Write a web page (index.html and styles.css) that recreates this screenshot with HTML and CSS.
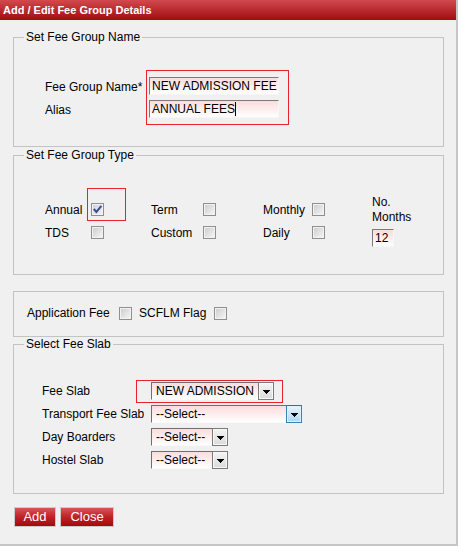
FILE: index.html
```html
<!DOCTYPE html>
<html lang="en">
<head>
<meta charset="utf-8">
<title>Add / Edit Fee Group Details</title>
<link rel="stylesheet" href="styles.css">
</head>
<body>
<div class="panel">
  <div class="titlebar">Add / Edit Fee Group Details</div>
  <div class="content">
    <fieldset class="fs fs-name">
      <legend>Set Fee Group Name</legend>
      <div class="name-body">
        <div class="name-labels"><span>Fee Group Name*</span><span>Alias</span></div>
        <div class="redbox">
          <span class="field w130">NEW ADMISSION FEE</span>
          <span class="field w130">ANNUAL FEES<i class="caret"></i></span>
        </div>
      </div>
    </fieldset>

    <fieldset class="fs fs-type">
      <legend>Set Fee Group Type</legend>
      <div class="type-grid">
        <div class="months">
          <div>No.</div>
          <div>Months</div>
          <span class="field w22">12</span>
        </div>
        <span class="lbl">Annual</span>
        <span class="cbcell"><span class="cb checked hl"><svg width="11" height="11" viewBox="0 0 11 11"><path d="M1.8 5 L4.4 8 L9.4 1.8" fill="none" stroke="#3a4c9a" stroke-width="2"/></svg></span></span>
        <span class="lbl">Term</span>
        <span class="cbcell"><span class="cb"></span></span>
        <span class="lbl">Monthly</span>
        <span class="cbcell"><span class="cb"></span></span>
        <span class="lbl">TDS</span>
        <span class="cbcell"><span class="cb"></span></span>
        <span class="lbl">Custom</span>
        <span class="cbcell"><span class="cb"></span></span>
        <span class="lbl">Daily</span>
        <span class="cbcell"><span class="cb"></span></span>
      </div>
    </fieldset>

    <fieldset class="fs fs-flags">
      <div class="flags">
        <span class="flag-lbl w92">Application Fee</span>
        <span class="cb"></span>
        <span class="flag-lbl w75 gap7">SCFLM Flag</span>
        <span class="cb"></span>
      </div>
    </fieldset>

    <fieldset class="fs fs-slab">
      <legend>Select Fee Slab</legend>
      <div class="slab-rows">
        <div class="slab-row">
          <span class="slab-lbl">Fee Slab</span>
          <div class="sel w123 hl2">
            <span class="val">NEW ADMISSION</span>
            <span class="arr"><svg width="7" height="4" viewBox="0 0 7 4"><path d="M0 0h7v1h-1v1h-1v1h-1v1h-1v-1h-1v-1h-1v-1h-1z" fill="#000"/></svg></span>
          </div>
        </div>
        <div class="slab-row">
          <span class="slab-lbl">Transport Fee Slab</span>
          <div class="sel w151">
            <span class="val">--Select--</span>
            <span class="arr focus"><svg width="7" height="4" viewBox="0 0 7 4"><path d="M0 0h7v1h-1v1h-1v1h-1v1h-1v-1h-1v-1h-1v-1h-1z" fill="#000"/></svg></span>
          </div>
        </div>
        <div class="slab-row">
          <span class="slab-lbl">Day Boarders</span>
          <div class="sel w77">
            <span class="val">--Select--</span>
            <span class="arr"><svg width="7" height="4" viewBox="0 0 7 4"><path d="M0 0h7v1h-1v1h-1v1h-1v1h-1v-1h-1v-1h-1v-1h-1z" fill="#000"/></svg></span>
          </div>
        </div>
        <div class="slab-row">
          <span class="slab-lbl">Hostel Slab</span>
          <div class="sel w77">
            <span class="val">--Select--</span>
            <span class="arr"><svg width="7" height="4" viewBox="0 0 7 4"><path d="M0 0h7v1h-1v1h-1v1h-1v1h-1v-1h-1v-1h-1v-1h-1z" fill="#000"/></svg></span>
          </div>
        </div>
      </div>
    </fieldset>

    <div class="actions">
      <button class="btn btn-add" type="button">Add</button>
      <button class="btn btn-close" type="button">Close</button>
    </div>
  </div>
</div>
</body>
</html>
```

FILE: styles.css
```css
html, body {
  margin: 0;
  padding: 0;
  background: #f0f0f0;
}
body {
  font-family: "Liberation Sans", Arial, sans-serif;
  font-size: 12px;
  color: #000;
}
.panel {
  width: 456px;
  height: 544px;
  background: #f0f0f0;
  border-right: 2px solid #c6c6c6;
  border-bottom: 2px solid #c6c6c6;
}
.titlebar {
  height: 20px;
  line-height: 20px;
  padding-left: 3px;
  color: #fff;
  font-size: 11px;
  font-weight: bold;
  background: linear-gradient(#d24a4e 0%, #b92a2e 50%, #a00d10 100%);
}
.content {
  padding: 10px 0 0 13px;
}
.fs {
  margin: 0;
  padding: 0;
  border: 1px solid #c3c3c3;
  width: 431px;
  box-sizing: border-box;
  min-width: 0;
}
.fs legend {
  margin-left: 10px;
  padding: 0 2px;
  line-height: 14px;
  font-size: 12px;
}

/* name */
.name-body {
  display: flex;
  padding: 26px 0 21px 31px;
}
.name-labels {
  width: 101px;
  display: flex;
  flex-direction: column;
  gap: 5px;
  padding-top: 8px;
}
.name-labels span {
  height: 18px;
  line-height: 18px;
}
.redbox {
  border: 1px solid #e3242b;
  padding: 6px 9px 6px 2px;
  display: flex;
  flex-direction: column;
  gap: 5px;
}
.field {
  display: block;
  height: 18px;
  box-sizing: border-box;
  border-top: 1px solid #7b7b7b;
  border-left: 1px solid #7b7b7b;
  border-right: 1px solid #f6f6f6;
  border-bottom: 1px solid #f6f6f6;
  background: linear-gradient(#fbdcdc, #fff);
  padding-left: 2px;
  line-height: 17px;
  white-space: nowrap;
  overflow: hidden;
}
.w130 { width: 130px; }
.w22 { width: 22px; }
.caret {
  display: inline-block;
  width: 1px;
  height: 14px;
  background: #000;
  vertical-align: -3px;
}

/* type */
.fs-type { margin-top: 1px; }
.type-grid {
  display: grid;
  grid-template-columns: 46px 60px 52px 60px 49px 60px auto;
  grid-template-rows: 23px 23px;
  padding: 36px 0 30px 31px;
}
.lbl { line-height: 25px; height: 23px; }
.cbcell {
  display: flex;
  align-items: center;
}
.months {
  grid-column: 7;
  grid-row: 1 / span 2;
  align-self: start;
  margin-top: -3px;
  line-height: 15px;
}
.months .field { margin-top: 4px; }

.cb {
  position: relative;
  display: inline-flex;
  align-items: center;
  justify-content: center;
  width: 13px;
  height: 13px;
  box-sizing: border-box;
  border: 1px solid #8e8f8f;
  background: linear-gradient(135deg, #cbcbcb, #f7f7f7);
  box-shadow: inset 0 0 0 1px #f2f2f2;
  flex: none;
}
.cb.checked {
  background: linear-gradient(135deg, #cfd0d8, #f4f4f7);
}
.hl::after {
  content: "";
  position: absolute;
  left: -5px;
  top: -16px;
  width: 39px;
  height: 33px;
  box-sizing: border-box;
  border: 1px solid #e3242b;
}

/* flags */
.fs-flags { margin-top: 16px; }
.flags {
  display: flex;
  align-items: center;
  height: 23px;
  padding: 10px 0 11px 13px;
}
.flag-lbl { line-height: 25px; }
.w92 { width: 92px; }
.w75 { width: 75px; }
.gap7 { margin-left: 7px; }

/* slab */
.slab-rows {
  display: flex;
  flex-direction: column;
  gap: 5px;
  padding: 31px 0 24px 28px;
}
.slab-row {
  display: flex;
  align-items: center;
  height: 18px;
}
.slab-lbl { width: 109px; line-height: 19px; }
.sel {
  position: relative;
  display: flex;
  height: 18px;
}
.w123 { width: 123px; }
.w151 { width: 151px; }
.w77 { width: 77px; }
.sel .val {
  flex: 1;
  box-sizing: border-box;
  border-top: 1px solid #6f6f6f;
  border-left: 1px solid #6f6f6f;
  border-bottom: 1px solid #fafafa;
  background: linear-gradient(#fbdcdc, #fff);
  padding-left: 4px;
  line-height: 16px;
  white-space: nowrap;
  overflow: hidden;
}
.sel .arr {
  width: 16px;
  box-sizing: border-box;
  border: 1px solid #7a7a7a;
  background: linear-gradient(#f4f4f4, #dadada);
  box-shadow: inset 0 0 0 1px #f8f8f8;
  display: flex;
  align-items: center;
  justify-content: center;
  padding-top: 2px;
}
.sel .arr.focus {
  border-color: #3c7fb1;
  border-top-color: #5a6670;
  background: linear-gradient(#e8f5fd, #a7d9f5);
  box-shadow: inset 0 0 0 1px #dff0fb;
}
.hl2::after {
  content: "";
  position: absolute;
  left: -15px;
  top: -2px;
  width: 147px;
  height: 23px;
  box-sizing: border-box;
  border: 1px solid #e3242b;
}

/* actions */
.actions {
  display: flex;
  gap: 4px;
  margin-top: 13px;
  margin-left: 1px;
}
.btn {
  height: 20px;
  margin: 0;
  padding: 0;
  font-family: "Liberation Sans", Arial, sans-serif;
  font-size: 13px;
  color: #fff;
  border: 1px solid #cbcbcb;
  background: linear-gradient(#dc5357 0%, #bd2226 50%, #a00b0f 100%);
  line-height: 18px;
  text-align: center;
}
.btn-add { width: 42px; }
.btn-close { width: 54px; }
```
